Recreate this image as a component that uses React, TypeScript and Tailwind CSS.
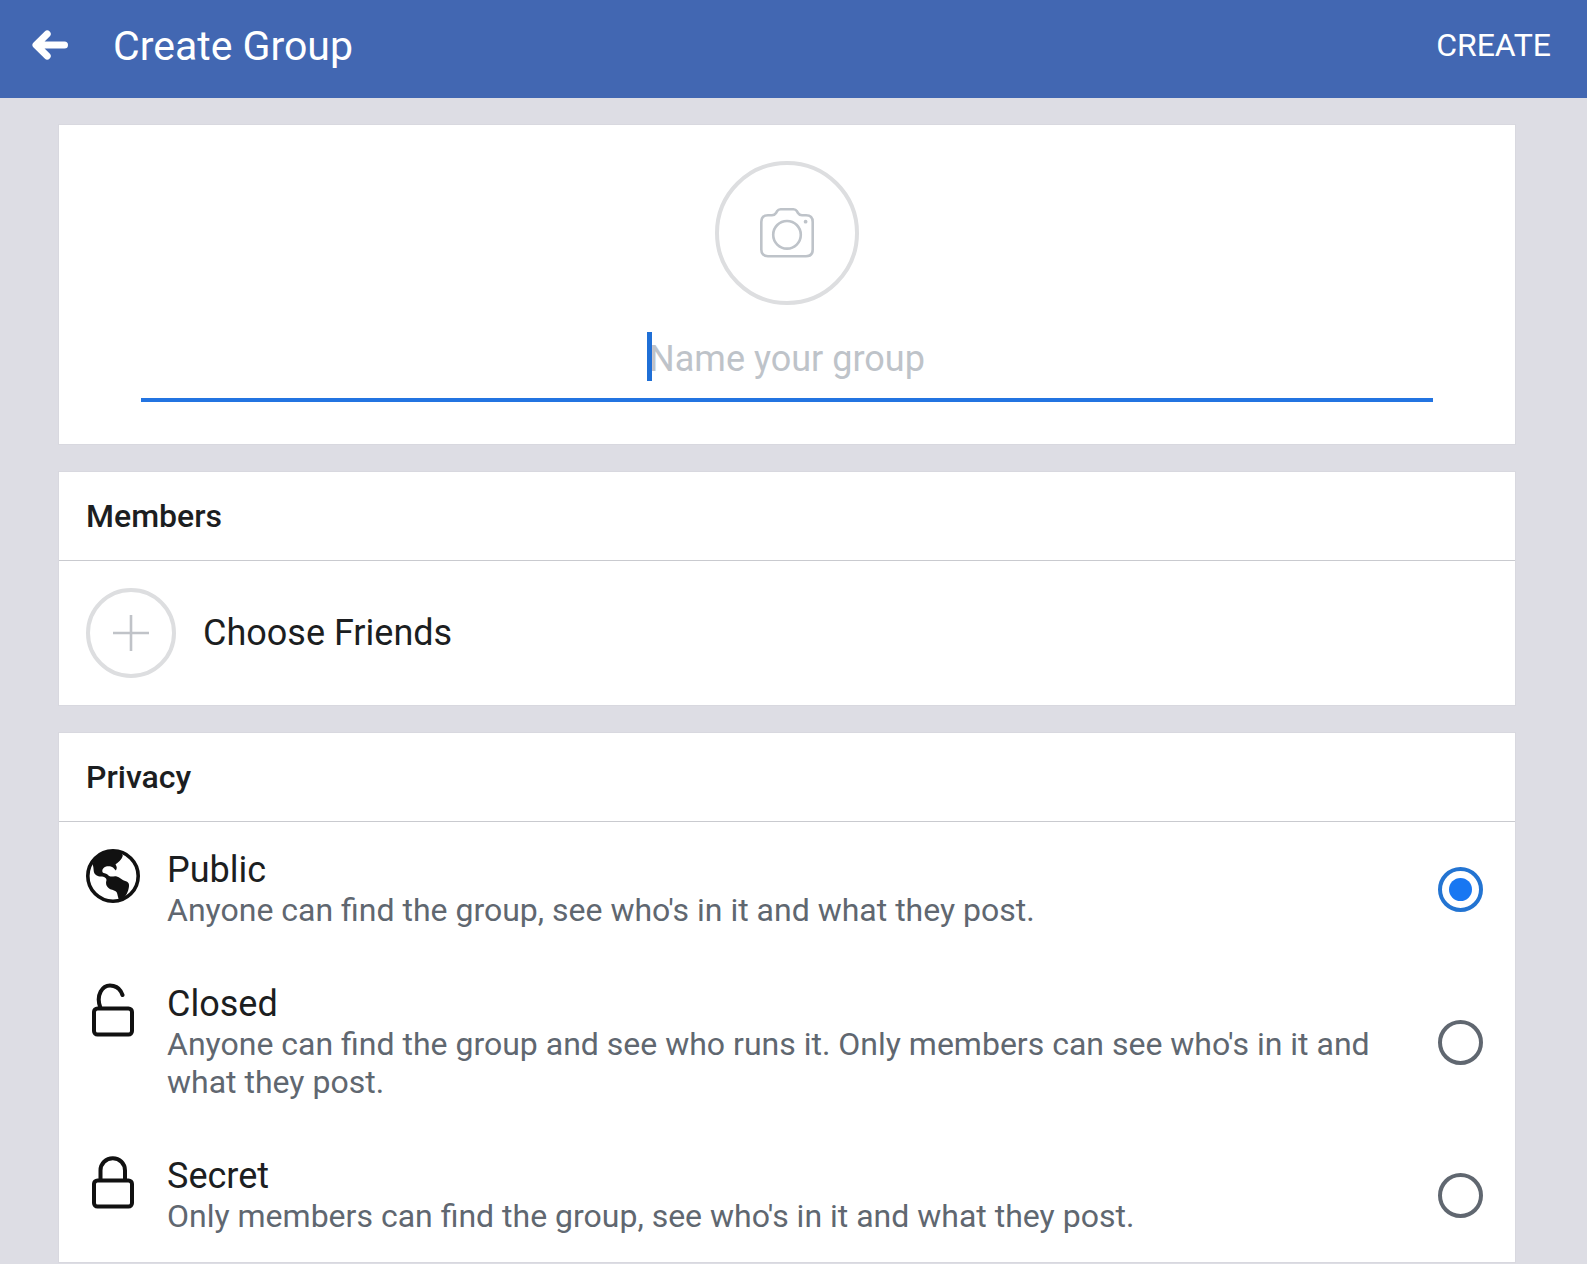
import { useState } from "react";
import type { ReactNode } from "react";

function BackIcon() {
  return (
    <svg viewBox="0 0 36 30" className="h-[30px] w-9" fill="none" stroke="currentColor" strokeWidth="7" strokeLinecap="round" strokeLinejoin="round" aria-hidden="true">
      <path d="M5 15H32.5M15.200 4L4 15L15.200 26" />
    </svg>
  );
}

function CameraIcon() {
  return (
    <svg viewBox="0 0 54 50" className="h-[50px] w-[54px] text-[#bec3c9]" fill="none" stroke="currentColor" strokeWidth="2.6" strokeLinejoin="round" aria-hidden="true">
      <path d="M8 7.300H12C14 7.300 15 6.600 16 5L17 3.300C18 1.800 19 1.300 20.600 1.300H33.400C35 1.300 36 1.800 37 3.300L38 5C39 6.600 40 7.300 42 7.300H46C50.400 7.300 52.700 10 52.700 14V41.500C52.700 45.500 50.400 48.200 46 48.200H8C3.600 48.200 1.300 45.500 1.300 41.500V14C1.300 10 3.600 7.300 8 7.300Z" />
      <circle cx="27" cy="26.800" r="13.800" />
      <circle cx="45.600" cy="13.700" r="1.900" fill="currentColor" stroke="none" />
    </svg>
  );
}

function PlusIcon() {
  return (
    <svg viewBox="0 0 36 36" className="size-9 text-[#c0c3c8]" fill="none" stroke="currentColor" strokeWidth="2.600" aria-hidden="true">
      <path d="M18 0V36M0 18H36" />
    </svg>
  );
}

function GlobeIcon() {
  return (
    <svg viewBox="0 0 54 54" className="size-[54px]" fill="none" aria-hidden="true">
      <circle cx="27" cy="27" r="25.200" stroke="currentColor" strokeWidth="3.600" />
      <path
        fill="currentColor"
        d="M27 1.500C18 1.800 10 7 6.500 15C7.500 17.500 7.500 20 7.800 22.500C8.500 26 11.500 27.500 15 27.500C18 27.500 20.500 29 20.500 31C19.500 34 20 36.500 22 38.500C24 41 28.500 40.800 30.500 43C32 45.500 31.500 49 34 52C39 49 41.500 44.500 42.500 40C43.500 36.500 43.500 33.500 40 32.300C36 31.500 34 28 30 27.300C27 27 24.500 28.500 22.500 26.500C21.500 25 19 24.500 17 23.800C15.500 22 16.500 19 19.500 17.800C22 17 25 17.300 27 18.500L29.800 21.500C31.300 19.500 31 17.500 29.500 15.500C31.500 13.500 36 11 36.800 6.500C36 4.500 34 3 32 1.800Z"
      />
    </svg>
  );
}

function LockIcon({ open = false }: { open?: boolean }) {
  return (
    <svg viewBox="0 0 54 54" className="size-[54px]" fill="none" stroke="currentColor" strokeWidth="4" strokeLinecap="round" strokeLinejoin="round" aria-hidden="true">
      <rect x="8" y="25.500" width="38" height="26" rx="3.500" />
      <path d={open ? "M14.500 25C12.300 19.500 12.300 13 14.700 8.500C17.500 3.500 22.500 1.800 27.500 3C32 4 35 7.500 36.500 12" : "M14.500 25V15.500C14.500 8.500 20 3.300 26.800 3.300C33.600 3.300 39 8.500 39 15.500V25"} />
    </svg>
  );
}

const options: { id: string; title: string; text: string; icon: ReactNode }[] = [
  { id: "public", title: "Public", text: "Anyone can find the group, see who's in it and what they post.", icon: <GlobeIcon /> },
  { id: "closed", title: "Closed", text: "Anyone can find the group and see who runs it. Only members can see who's in it and what they post.", icon: <LockIcon open /> },
  { id: "secret", title: "Secret", text: "Only members can find the group, see who's in it and what they post.", icon: <LockIcon /> },
];

const card = "bg-white outline outline-[#d8d8df]";
const heading = "border-b border-[#c9cacf] px-[27px] py-6 text-[32px] leading-10 font-medium";

export default function App() {
  const [privacy, setPrivacy] = useState("public");
  const [name, setName] = useState("");

  return (
    <div className="min-h-screen bg-[#dddde4] font-[Roboto,sans-serif] text-[#1c1e21]">
      <header className="flex h-[98px] items-center bg-[#4267b2] pr-9 pb-2 pl-8 text-white">
        <button type="button" aria-label="Back">
          <BackIcon />
        </button>
        <h1 className="ml-[45px] pt-0.5 text-[41px] leading-12">Create Group</h1>
        <button type="button" className="ml-auto text-[32px] leading-10">CREATE</button>
      </header>

      <main className="flex flex-col gap-7 pt-[27px] pr-[72px] pl-[59px]">
        <section className={`${card} flex flex-col items-center px-[82px] pt-9 pb-[42px]`}>
          <button type="button" aria-label="Add group photo" className="grid size-36 place-items-center rounded-full border-4 border-[#dddee0]">
            <CameraIcon />
          </button>
          <div className="relative mt-7 w-full border-b-4 border-[#2374e1] pb-[13px]">
            <input
              aria-label="Group name"
              value={name}
              onChange={(e) => setName(e.target.value)}
              placeholder="Name your group"
              className="block h-13 w-full text-center text-[36px] outline-none placeholder:text-[#bec3c9]"
            />
            {name === "" && <span className="absolute -top-px left-1/2 -ml-[140px] h-[49px] w-[5px] bg-[#1f6fd6]" />}
          </div>
        </section>

        <section className={card}>
          <h2 className={heading}>Members</h2>
          <button type="button" className="flex w-full items-center gap-[27px] p-[27px] text-left text-[36px] leading-[42px]">
            <span className="grid size-[90px] place-items-center rounded-full border-4 border-[#dddee0]">
              <PlusIcon />
            </span>
            Choose Friends
          </button>
        </section>

        <section className={card}>
          <h2 id="privacy-heading" className={heading}>Privacy</h2>
          <div role="radiogroup" aria-labelledby="privacy-heading">
            {options.map((o) => (
              <label key={o.id} className="flex items-center py-[27px] pr-8 pl-[27px]">
                <span className="shrink-0 self-start text-[#111111]">{o.icon}</span>
                <span className="mr-12 ml-[27px] flex-1">
                  <span className="block text-[36px] leading-[42px]">{o.title}</span>
                  <span className="block text-[32px] leading-[38px] text-[#606770]">{o.text}</span>
                </span>
                <input
                  type="radio"
                  name="privacy"
                  value={o.id}
                  checked={privacy === o.id}
                  onChange={() => setPrivacy(o.id)}
                  className="grid size-[45px] shrink-0 appearance-none place-items-center rounded-full border-4 border-[#606770] before:size-[23px] before:rounded-full checked:border-[#2374d2] checked:before:bg-[#1877f2]"
                />
              </label>
            ))}
          </div>
        </section>
      </main>
    </div>
  );
}
